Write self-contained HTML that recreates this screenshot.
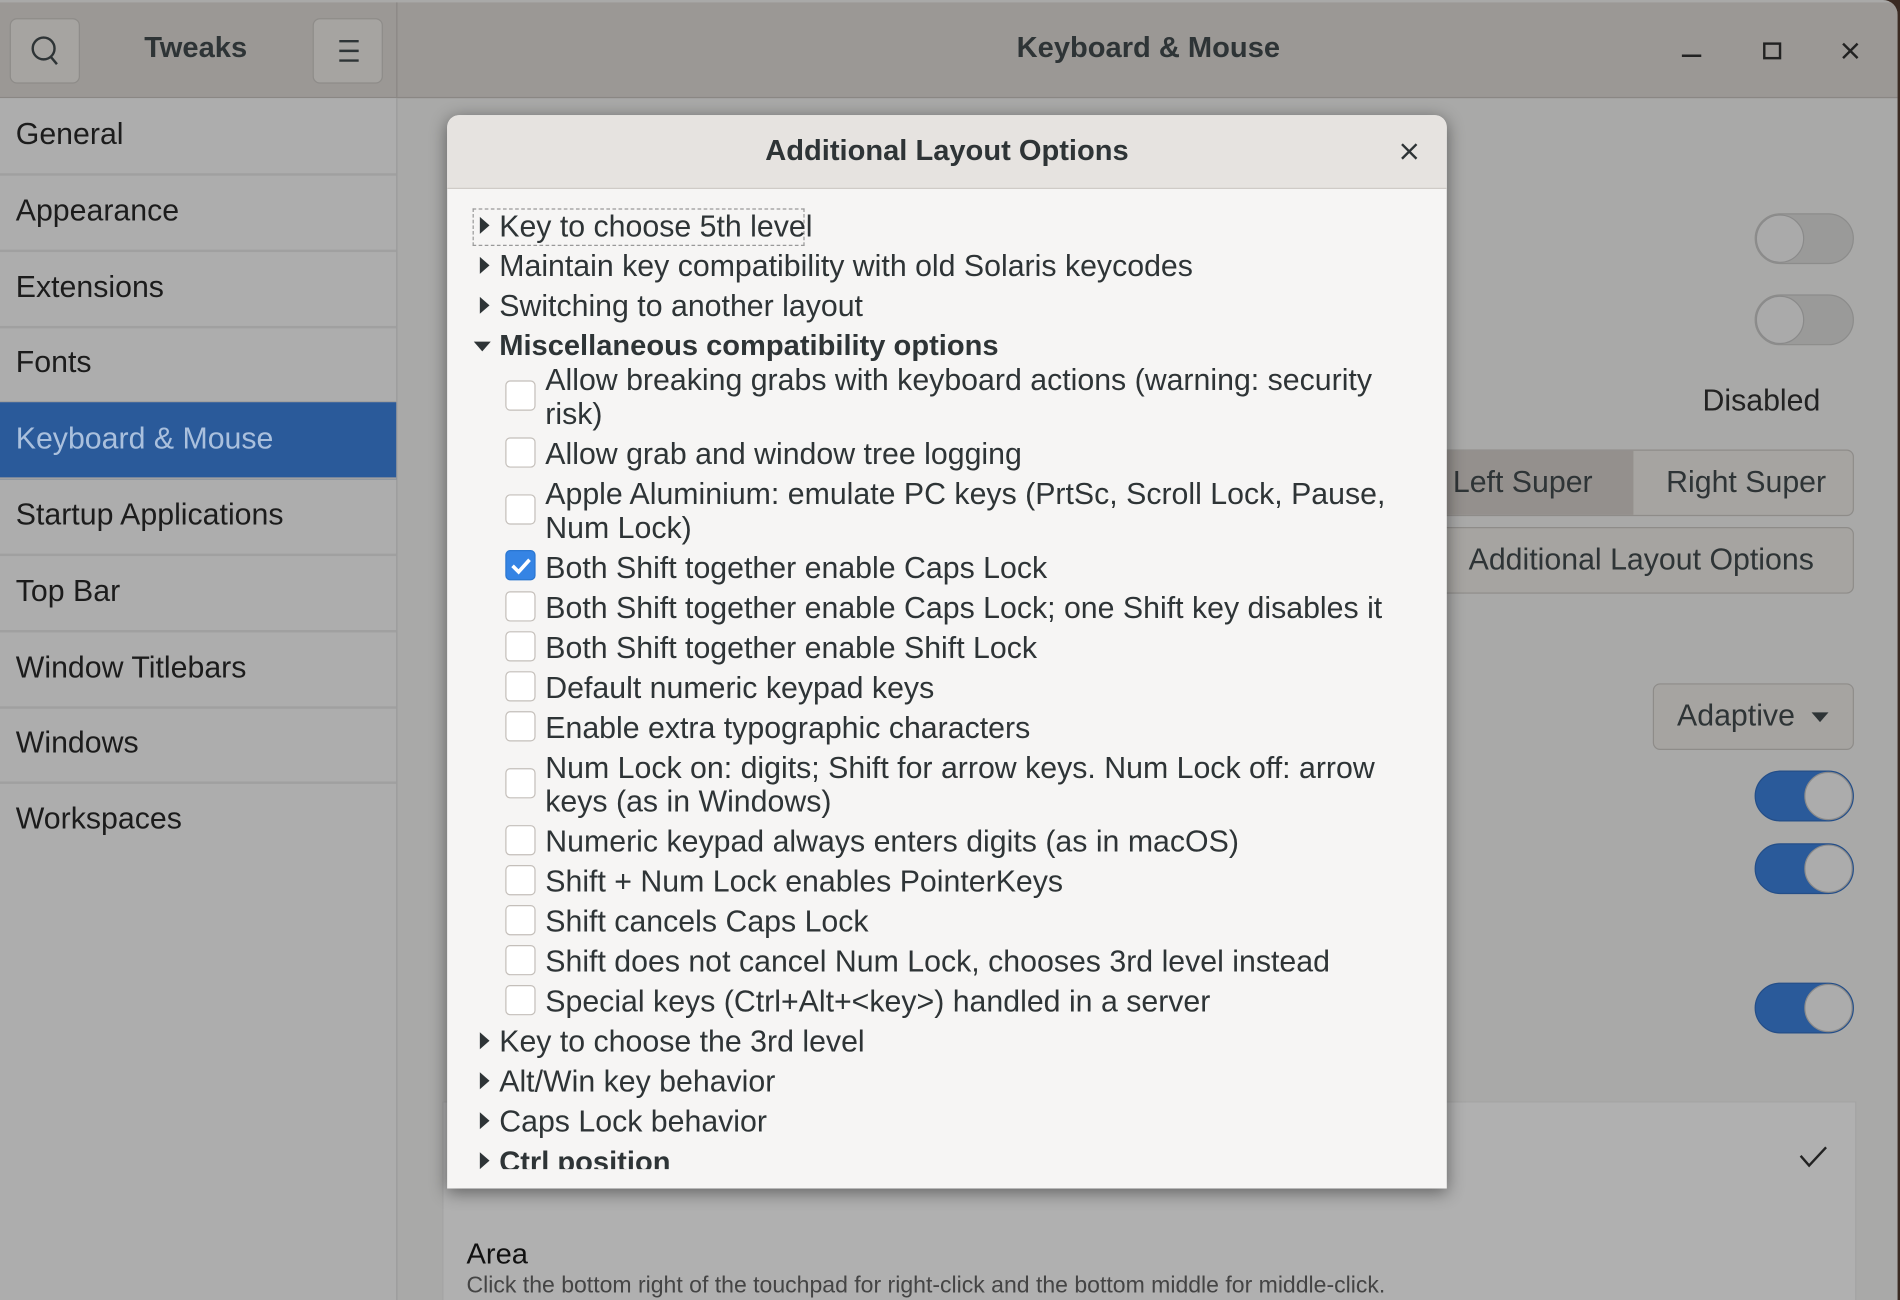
<!DOCTYPE html>
<html><head><meta charset="utf-8"><style>
html,body{margin:0;padding:0;width:1900px;height:1300px;overflow:hidden;background:#3a2a22}
#w{position:absolute;left:0;top:0;width:1568px;height:1073px;transform:scale(1.21173,1.21156);transform-origin:0 0;font-family:"Liberation Sans",sans-serif;color:#2e3436}
.a{position:absolute}
.win{left:0;top:0;width:1566px;height:1073px;background:#a9a9a8;border-top-right-radius:12px;overflow:hidden}
.hb{left:0;top:2px;width:1566px;height:78px;background:#9b9895;border-bottom:1px solid #8a8784}
.side{left:0;top:81px;width:327px;height:992px;background:#adadad;border-right:1px solid #999}
.it{position:absolute;left:0;width:327px;height:62px;border-bottom:2px solid #a0a0a0;font-size:25px;line-height:60px;text-indent:13px;color:#1c1c1c}
.sel{background:#2a5a9a;color:#aac0dd}
.btn{background:#a6a4a1;border:1px solid #8e8c89;border-radius:6px}
.tg{width:80px;height:40px;border-radius:21px;background:#9a9a99;border:1px solid #8c8c8b}
.tg i{position:absolute;left:0;top:0;width:40px;height:40px;border-radius:50%;background:#aaaaaa;border:1px solid #8a8a8a;box-sizing:border-box}
.on{background:#2a5a9a;border-color:#244e88}
.on i{left:40px;background:#acacac}
.dlg{left:369px;top:95px;width:825px;height:886px;background:#f6f5f4;border-radius:10px 10px 0 0;box-shadow:0 3px 14px rgba(0,0,0,.45);overflow:hidden}
.dh{left:0;top:0;width:825px;height:60px;background:#e6e3e0;border-bottom:1px solid #cfcbc7;text-align:center;font-weight:bold;font-size:24px;line-height:60px}
.r{position:absolute;font-size:25px;white-space:nowrap;line-height:28px}
.tri{position:absolute;width:0;height:0;border-top:7px solid transparent;border-bottom:7px solid transparent;border-left:8px solid #2e3436}
.trd{position:absolute;width:0;height:0;border-left:7px solid transparent;border-right:7px solid transparent;border-top:8px solid #2e3436}
.cb{position:absolute;left:48px;width:23px;height:23px;border:1px solid #c4bfba;border-radius:4px;background:#fff}
.ck{background:#3584e4;border-color:#2a76d0}
</style></head><body><div id="w">
<div class="a win">
 <div class="a hb">
  <div class="a btn" style="left:8px;top:13px;width:56px;height:52px"><svg width="56" height="52"><circle cx="27" cy="24" r="9" fill="none" stroke="#2e3436" stroke-width="2"/><path d="M33 31l5 6" stroke="#2e3436" stroke-width="2"/></svg></div>
  <div class="a" style="left:119px;top:24px;font-size:24px;font-weight:bold">Tweaks</div>
  <div class="a btn" style="left:258px;top:13px;width:56px;height:52px"><svg width="56" height="52"><path d="M21 18h16M21 26h16M21 34h16" stroke="#2e3436" stroke-width="2"/></svg></div>
  <div class="a" style="left:327px;top:0;width:1px;height:78px;background:#8a8784"></div>
  <div class="a" style="left:839px;top:24px;font-size:24px;font-weight:bold">Keyboard &amp; Mouse</div>
  <svg class="a" style="left:1380px;top:22px" width="160" height="40"><path d="M8 22h16" stroke="#222" stroke-width="2"/><rect x="76" y="12" width="13" height="12" fill="none" stroke="#222" stroke-width="2"/><path d="M141 12l12 12M153 12l-12 12" stroke="#222" stroke-width="2"/></svg>
 </div>
 <div class="a side">
  <div class="it" style="top:0">General</div>
  <div class="it" style="top:63px">Appearance</div>
  <div class="it" style="top:126px">Extensions</div>
  <div class="it" style="top:188px">Fonts</div>
  <div class="it sel" style="top:251px">Keyboard &amp; Mouse</div>
  <div class="it" style="top:314px">Startup Applications</div>
  <div class="it" style="top:377px">Top Bar</div>
  <div class="it" style="top:440px">Window Titlebars</div>
  <div class="it" style="top:502px">Windows</div>
  <div class="it" style="top:565px;border:0">Workspaces</div>
 </div>
 <div class="a tg" style="left:1448px;top:176px"><i></i></div>
 <div class="a tg" style="left:1448px;top:243px"><i></i></div>
 <div class="a" style="left:1405px;top:317px;font-size:25px;color:#222">Disabled</div>
 <div class="a btn" style="left:1150px;top:371px;width:378px;height:53px;overflow:hidden">
  <div class="a" style="left:0;top:0;width:197px;height:53px;background:#94908d"></div>
  <div class="a" style="left:48px;top:12px;font-size:25px">Left Super</div>
  <div class="a" style="left:224px;top:12px;font-size:25px">Right Super</div>
 </div>
 <div class="a btn" style="left:1150px;top:435px;width:378px;height:53px"><div class="a" style="left:61px;top:12px;font-size:25px">Additional Layout Options</div></div>
 <div class="a btn" style="left:1364px;top:564px;width:164px;height:53px"><div class="a" style="left:19px;top:12px;font-size:25px">Adaptive</div><div class="trd" style="left:130px;top:23px"></div></div>
 <div class="a tg on" style="left:1448px;top:636px"><i></i></div>
 <div class="a tg on" style="left:1448px;top:696px"><i></i></div>
 <div class="a tg on" style="left:1448px;top:811px"><i></i></div>
 <div class="a" style="left:365px;top:909px;width:1165px;height:170px;background:#b0b0b0;border:1px solid #a3a3a3"></div>
 <svg class="a" style="left:1484px;top:944px" width="26" height="22"><path d="M2 10l7 8L23 3" fill="none" stroke="#222" stroke-width="2"/></svg>
 <div class="a" style="left:385px;top:1022px;font-size:24px;color:#111">Area</div>
 <div class="a" style="left:385px;top:1051px;font-size:19px;color:#444">Click the bottom right of the touchpad for right-click and the bottom middle for middle-click.</div>
</div>
<div class="a dlg">
 <div class="a dh">Additional Layout Options</div>
 <svg class="a" style="left:786px;top:22px" width="16" height="16"><path d="M2 2l12 12M14 2L2 14" stroke="#2e3436" stroke-width="2"/></svg>
 <div class="a" style="left:21px;top:77px;width:272px;height:29px;border:1px dashed #999"></div>
 <div class="tri" style="left:27px;top:84px"></div><div class="r" style="left:43px;top:78px">Key to choose 5th level</div>
 <div class="tri" style="left:27px;top:117px"></div><div class="r" style="left:43px;top:111px">Maintain key compatibility with old Solaris keycodes</div>
 <div class="tri" style="left:27px;top:150px"></div><div class="r" style="left:43px;top:144px">Switching to another layout</div>
 <div class="trd" style="left:22px;top:187px"></div><div class="r" style="left:43px;top:177px;font-weight:bold;font-size:24px">Miscellaneous compatibility options</div>
 <div class="cb" style="top:219px"></div><div class="r" style="left:81px;top:205px">Allow breaking grabs with keyboard actions (warning: security<br>risk)</div>
 <div class="cb" style="top:266px"></div><div class="r" style="left:81px;top:266px">Allow grab and window tree logging</div>
 <div class="cb" style="top:313px"></div><div class="r" style="left:81px;top:299px">Apple Aluminium: emulate PC keys (PrtSc, Scroll Lock, Pause,<br>Num Lock)</div>
 <div class="cb ck" style="top:359px"><svg width="23" height="23"><path d="M5 12l5 5 9-10" fill="none" stroke="#fff" stroke-width="3"/></svg></div><div class="r" style="left:81px;top:360px">Both Shift together enable Caps Lock</div>
 <div class="cb" style="top:393px"></div><div class="r" style="left:81px;top:393px">Both Shift together enable Caps Lock; one Shift key disables it</div>
 <div class="cb" style="top:426px"></div><div class="r" style="left:81px;top:426px">Both Shift together enable Shift Lock</div>
 <div class="cb" style="top:459px"></div><div class="r" style="left:81px;top:459px">Default numeric keypad keys</div>
 <div class="cb" style="top:492px"></div><div class="r" style="left:81px;top:492px">Enable extra typographic characters</div>
 <div class="cb" style="top:539px"></div><div class="r" style="left:81px;top:525px">Num Lock on: digits; Shift for arrow keys. Num Lock off: arrow<br>keys (as in Windows)</div>
 <div class="cb" style="top:586px"></div><div class="r" style="left:81px;top:586px">Numeric keypad always enters digits (as in macOS)</div>
 <div class="cb" style="top:619px"></div><div class="r" style="left:81px;top:619px">Shift + Num Lock enables PointerKeys</div>
 <div class="cb" style="top:652px"></div><div class="r" style="left:81px;top:652px">Shift cancels Caps Lock</div>
 <div class="cb" style="top:685px"></div><div class="r" style="left:81px;top:685px">Shift does not cancel Num Lock, chooses 3rd level instead</div>
 <div class="cb" style="top:718px"></div><div class="r" style="left:81px;top:718px">Special keys (Ctrl+Alt+&lt;key&gt;) handled in a server</div>
 <div class="tri" style="left:27px;top:757px"></div><div class="r" style="left:43px;top:751px">Key to choose the 3rd level</div>
 <div class="tri" style="left:27px;top:790px"></div><div class="r" style="left:43px;top:784px">Alt/Win key behavior</div>
 <div class="tri" style="left:27px;top:823px"></div><div class="r" style="left:43px;top:817px">Caps Lock behavior</div>
 <div class="a" style="left:0;top:848px;width:825px;height:22px;overflow:hidden"><div class="tri" style="left:27px;top:8px"></div><div class="r" style="left:43px;top:3px;font-weight:bold;font-size:24px">Ctrl position</div></div>
</div>
</div></body></html>
